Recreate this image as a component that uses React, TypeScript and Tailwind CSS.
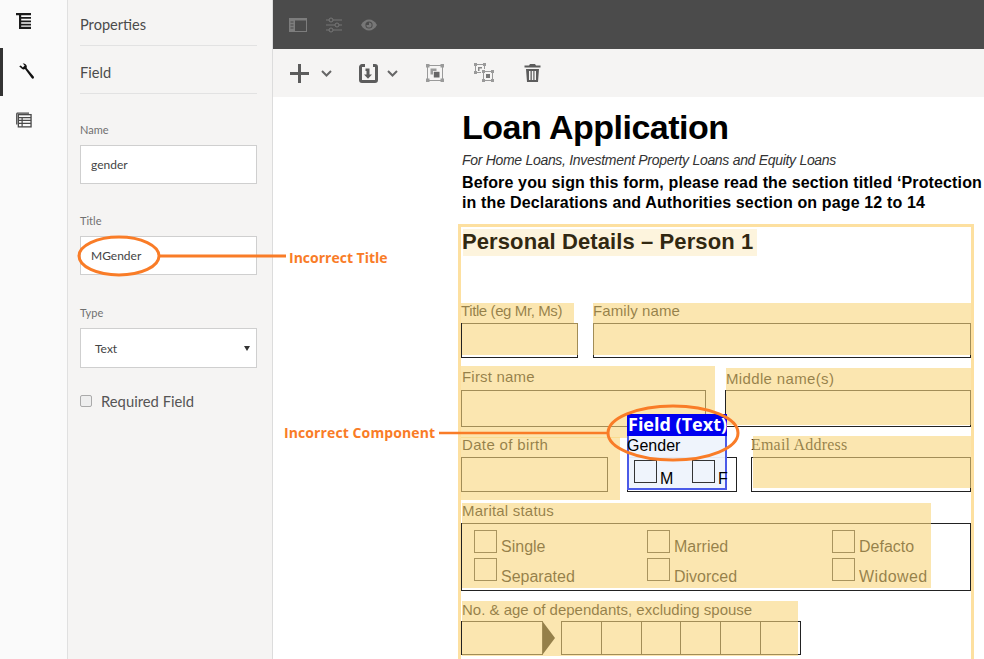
// Form editor screenshot: tool rail, properties panel, PDF form with highlighted fields
import type { ReactNode } from 'react';

function TreeIcon() {
  return (
    <svg width="16" height="16" viewBox="0 0 16 16" className="text-[#1c1c1c]">
      <path d="M0 0h15v2.200H0zM3 4h12v1.800H3zM3 7.400h12v1.800H3zM3 10.800h12v1.800H3zM3 13.800h12V16H3zM3 0h2.200v16H3z" fill="currentColor" />
    </svg>
  );
}

function WrenchIcon() {
  return (
    <svg width="16" height="16" viewBox="0 0 16 16">
      <path d="M.2 3.200 2.600 5.600c1.100 1 2.400 1.100 3.400.5l6.600 9c.5.6 1.200.7 1.800.3.700-.5.800-1.200.3-1.800L7.600 5c.5-1.300.2-2.600-.8-3.600C5.900.5 4.700.2 3.700.6l2 2-1.900 2-2-2.100z" fill="#111" />
    </svg>
  );
}

function TableIcon() {
  return (
    <svg width="16" height="16" viewBox="0 0 17 17" fill="none" stroke="#4a4a4a">
      <path d="M.8 1.200h13M.8 1.200v12" strokeWidth="1.400" />
      <rect x="2.500" y="2.800" width="13.500" height="13" strokeWidth="1.400" />
      <path d="M2.500 6h13.500M2.500 9h13.500M2.500 12.200h13.500M6.500 6v9.800" strokeWidth="1.300" />
    </svg>
  );
}

function PanelIcon() {
  return (
    <svg width="18" height="14" viewBox="0 0 18 14">
      <path d="M0 0h18v14H0z" fill="#7d7d7d" />
      <path d="M6 2.500h11v10.500H6z" fill="#4b4b4b" />
      <path d="M1.500 3.500h3v1h-3zM1.500 6.500h3v1h-3zM1.500 9.500h3v1h-3z" fill="#4b4b4b" />
    </svg>
  );
}

function SlidersIcon() {
  return (
    <svg width="18" height="16" viewBox="0 0 18 16" fill="none" stroke="#777" strokeWidth="1">
      <path d="M1 3h3.500M8 3h9M1 8h9M14 8h3M1 13h3.500M8 13h9" />
      <circle cx="6" cy="3" r="2" />
      <circle cx="12" cy="8" r="2" />
      <circle cx="6" cy="13" r="2" />
    </svg>
  );
}

function EyeIcon() {
  return (
    <svg width="16" height="12" viewBox="0 0 16 12">
      <path d="M0 6c2-3.600 4.800-5.500 8-5.500S14 2.400 16 6c-2 3.600-4.800 5.500-8 5.500S2 9.600 0 6z" fill="#777" />
      <circle cx="8" cy="6" r="3.600" fill="#4b4b4b" />
      <path d="M8 3.400A2.600 2.600 0 1 1 5.400 6H8z" fill="#777" />
    </svg>
  );
}

function Chevron({ className }: { className: string }) {
  return (
    <svg width="11" height="7" viewBox="0 0 11 7" fill="none" className={className}>
      <path d="M1 1l4.500 4.500L10 1" stroke="#666" strokeWidth="2" />
    </svg>
  );
}

function GroupIcon() {
  return (
    <svg width="18" height="18" viewBox="0 0 18 18">
      <g fill="#9a9a9a">
        <rect x="0" y="0" width="3.500" height="3.500" />
        <rect x="14.500" y="0" width="3.500" height="3.500" />
        <rect x="0" y="14.500" width="3.500" height="3.500" />
        <rect x="14.500" y="14.500" width="3.500" height="3.500" />
        <path d="M1 3h1v12H1zM16 3h1v12h-1zM3 1h12v1H3zM3 16h12v1H3z" />
        <path d="M4.500 4.500h6v2.500h-3.500v3.500H4.500z" />
      </g>
      <rect x="7.800" y="7.800" width="5.700" height="5.700" fill="#666" />
    </svg>
  );
}

function UngroupIcon() {
  return (
    <svg width="20" height="20" viewBox="0 0 20 20" fill="#9a9a9a">
      <path d="M0 0h3v3H0zM9 0h3v3H9zM0 8h3v3H0zM8 7h3v3H8zM17 7h3v3h-3zM8 16h3v3H8zM17 16h3v3h-3z" />
      <path d="M3 1h6v1H3zM1 3h1v5H1zM3 9h4v1H3zM10 1h1v5h-1zM11 8h6v1h-6zM11 17h6v1h-6zM9 10h1v6H9zM18 10h1v6h-1z" />
      <path d="M4 4h4v1.500H5.500V8H4z" fill="#888" />
      <rect x="12" y="11" width="4" height="4" fill="#777" />
    </svg>
  );
}

function TrashIcon() {
  return (
    <svg width="17" height="18" viewBox="0 0 17 18" fill="#5c5c5c">
      <path d="M6 0h5l1 1.500h4.500v2H.5v-2H5z" />
      <path d="M2 5h13l-1 13H3zM5 7v9h1.500V7zM7.800 7v9h1.500V7zM10.500 7v9H12V7z" fillRule="evenodd" />
    </svg>
  );
}

function SaveIcon() {
  return (
    <svg width="19" height="19" viewBox="0 0 19 19" fill="none">
      <path d="M6 1.500H3a1.500 1.500 0 0 0-1.500 1.500v13A1.500 1.500 0 0 0 3 17.500h13a1.500 1.500 0 0 0 1.500-1.500V3A1.500 1.500 0 0 0 16 1.500h-2" stroke="#5c5c5c" strokeWidth="3" />
      <path d="M6.500 4.500h4v6H13l-4 4.200-4-4.200h2.500V7H6.500z" fill="#5c5c5c" />
    </svg>
  );
}

function PanelField({ label, value, className }: { label: string; value: string; className: string }) {
  return (
    <div className={className}>
      <div className="text-[11px] leading-[14px] text-[#707070]">{label}</div>
      <div className="mt-[8px] h-[39px] w-[177px] border border-[#cfcfcf] bg-white pl-[10px] text-[12px] leading-[37px] text-[#444]">
        {value}
      </div>
    </div>
  );
}

function PropertiesPanel() {
  return (
    <aside className="w-[205px] shrink-0 border-r border-[#dcdcdc] bg-[#f5f4f3] pl-[12px] pr-[15px] font-['Lato',sans-serif]">
      <div className="h-[46px] border-b border-[#e2e2e2] pt-[14px] text-[14.6px] leading-[22px] text-[#4b4b4b]">Properties</div>
      <div className="h-[48px] border-b border-[#e2e2e2] pt-[16px] text-[14.6px] leading-[22px] text-[#4b4b4b]">Field</div>
      <PanelField label="Name" value="gender" className="mt-[29px]" />
      <PanelField label="Title" value="MGender" className="mt-[30px]" />
      <div className="mt-[31px]">
        <div className="text-[11px] leading-[14px] text-[#707070]">Type</div>
        <div className="mt-[8px] flex h-[40px] w-[177px] items-center justify-between border border-[#cfcfcf] bg-white pl-[14px] pr-[6px] text-[12px] text-[#444]">
          <span className="pt-[2px]">Text</span>
          <span className="h-0 w-0 border-x-[3px] border-t-[5px] border-x-transparent border-t-[#333]" />
        </div>
      </div>
      <div className="mt-[23px] flex items-center gap-[9px] text-[14.8px] leading-[20px] text-[#555]">
        <span className="h-[12px] w-[12px] rounded-[2px] border border-[#aaa] bg-[#eee]" />
        Required Field
      </div>
    </aside>
  );
}

// one printed field of the form: label over box, with the editor's tint lying over it
function Field({ label, labelClass, boxClass, className, children }: { label: string; labelClass: string; boxClass: string; className: string; children?: ReactNode }) {
  return (
    <div className={`relative shrink-0 ${className}`}>
      <div className={`h-[20px] whitespace-nowrap text-black ${labelClass}`}>{label}</div>
      <div className={`border border-[#222] ${boxClass}`} />
      {children}
    </div>
  );
}

function Tint({ className }: { className: string }) {
  return <div className={`absolute bg-[#f8d57b]/60 ${className}`} />;
}

function Option({ label, labelClass }: { label: string; labelClass: string }) {
  return (
    <div className="flex items-start gap-[4px] text-[16px] leading-[18px] text-black">
      <span className="h-[23px] w-[23px] shrink-0 border border-[#333]" />
      <span className={`whitespace-nowrap ${labelClass}`}>{label}</span>
    </div>
  );
}

function SelectedField() {
  return (
    <div className="absolute left-[166px] top-[-23px] flex h-[76px] w-[100px] flex-col border-2 border-t-0 border-[#4a5ae8] bg-[#eef3fc]/95">
      <div className="-mx-[2px] h-[22px] shrink-0 whitespace-nowrap bg-[#0000f0] pl-[1px] font-['Open_Sans',sans-serif] text-[18px] font-bold leading-[21px] text-white">
        Field (Text)
      </div>
      <div className="-ml-[2px] text-[16px] leading-[20px] text-black">Gender</div>
      <div className="mt-[4px] flex pl-[5px] text-[16px] leading-[18px] text-black">
        <span className="h-[23px] w-[23px] shrink-0 border border-[#333]" />
        <span className="ml-[3px] mt-[10px] w-[32px] shrink-0">M</span>
        <span className="h-[23px] w-[23px] shrink-0 border border-[#333]" />
        <span className="ml-[3px] mt-[10px] shrink-0">F</span>
      </div>
    </div>
  );
}

function FormBody() {
  return (
    <div className="font-['Liberation_Sans',sans-serif]">
      <div className="ml-[2px] mt-[2px] h-[27px] w-[294px] whitespace-nowrap bg-[#f5c855]/20 -indent-[1px] text-[22px] font-bold leading-[26px] tracking-[0.1px] text-[#312811]">
        Personal Details – Person 1
      </div>

      <div className="mt-[47px] flex gap-[15px]">
        <Field label="Title (eg Mr, Ms)" labelClass="text-[15px] leading-[16px] tracking-[-0.4px]" boxClass="h-[35px]" className="w-[117px]">
          <Tint className="left-0 top-0 h-[20px] w-[113px]" />
          <Tint className="left-[1px] top-[20px] h-[32px] w-[116px]" />
        </Field>
        <Field label="Family name" labelClass="text-[15px] leading-[16px] tracking-[0.1px]" boxClass="h-[35px]" className="w-[378px]">
          <Tint className="left-0 top-0 h-[52px] w-[378px]" />
        </Field>
      </div>

      <div className="mt-[12px] flex gap-[19px]">
        <Field label="First name" labelClass="pl-[1px] text-[15px] leading-[14px] tracking-[0.2px]" boxClass="h-[37px]" className="w-[245px]">
          <Tint className="left-0 top-[-4px] h-[72px] w-[254px]" />
        </Field>
        <Field label="Middle name(s)" labelClass="pl-[1px] text-[15px] leading-[18px] tracking-[0.35px]" boxClass="h-[37px]" className="w-[246px]">
          <Tint className="left-[1px] top-[-2px] h-[57px] w-[245px]" />
        </Field>
      </div>

      <div className="relative mt-[10px] flex">
        <Field label="Date of birth" labelClass="pl-[1px] text-[15px] leading-[16px] tracking-[0.35px]" boxClass="h-[35px]" className="w-[147px]">
          <Tint className="left-0 top-0 h-[63px] w-[159px]" />
        </Field>
        <div className="ml-[19px] mt-[20px] h-[35px] w-[110px] shrink-0 border border-[#222]" />
        <Field label="Email Address" labelClass="font-['Liberation_Serif',serif] text-[16px] leading-[16px] tracking-[0.2px]" boxClass="h-[35px]" className="ml-[14px] w-[220px]">
          <Tint className="left-[2px] top-[-1px] h-[52px] w-[218px]" />
        </Field>
        <SelectedField />
      </div>

      <div className="relative mt-[11px]">
        <div className="h-[20px] pl-[1px] text-[15px] leading-[16px] tracking-[0.2px] text-black">Marital status</div>
        <div className="grid h-[68px] w-[510px] grid-cols-[173px_185px_1fr] grid-rows-[28px_28px] border border-[#222] pl-[12px] pt-[6px]">
          <Option label="Single" labelClass="mt-[8px]" />
          <Option label="Married" labelClass="mt-[8px]" />
          <Option label="Defacto" labelClass="mt-[8px]" />
          <Option label="Separated" labelClass="mt-[10px]" />
          <Option label="Divorced" labelClass="mt-[10px]" />
          <Option label="Widowed" labelClass="mt-[10px] tracking-[0.4px]" />
        </div>
        <Tint className="left-[1px] top-0 h-[85px] w-[469px]" />
      </div>

      <div className="relative mt-[10px]">
        <div className="h-[20px] pl-[1px] text-[15px] leading-[18px] text-black">No. &amp; age of dependants, excluding spouse</div>
        <div className="flex h-[34px] items-center">
          <div className="h-full w-[82px] border border-[#222]" />
          <div className="h-0 w-0 border-y-[16px] border-l-[12px] border-y-transparent border-l-black" />
          <div className="ml-[6px] flex h-full w-[240px] divide-x divide-[#222] border border-[#222]">
            <span className="flex-1" />
            <span className="flex-1" />
            <span className="flex-1" />
            <span className="flex-1" />
            <span className="flex-1" />
            <span className="flex-1" />
          </div>
        </div>
        <Tint className="left-[1px] top-0 h-[55px] w-[336px]" />
      </div>
    </div>
  );
}

export default function App() {
  return (
    <div className="relative flex h-[659px] w-[984px] overflow-hidden bg-white">
      {/* Rail */}
      <nav className="flex w-[68px] shrink-0 flex-col border-r border-[#e0e0e0] bg-[#fafafa]">
        <div className="flex h-[48px] items-center pb-[7px] pl-[16px]"><TreeIcon /></div>
        <div className="flex h-[48px] items-center border-l-[3px] border-[#333] pb-[3px] pl-[16px]"><WrenchIcon /></div>
        <div className="flex h-[48px] items-center pl-[16px]"><TableIcon /></div>
      </nav>

      <PropertiesPanel />

      <main className="flex min-w-0 flex-1 flex-col">
        <div className="flex h-[49px] shrink-0 items-center gap-[18px] bg-[#4b4b4b] pl-[16px]">
          <PanelIcon />
          <SlidersIcon />
          <EyeIcon />
        </div>
        <div className="flex h-[48px] shrink-0 items-center bg-[#f5f4f3] pl-[17px]">
          <svg width="19" height="19" viewBox="0 0 19 19" fill="#5c5c5c"><path d="M8 0h3v8h8v3h-8v8H8v-8H0V8h8z" /></svg>
          <Chevron className="ml-[12px]" />
          <div className="ml-[27px]"><SaveIcon /></div>
          <Chevron className="ml-[9px]" />
          <div className="ml-[28px]"><GroupIcon /></div>
          <div className="ml-[30px]"><UngroupIcon /></div>
          <div className="ml-[30px]"><TrashIcon /></div>
        </div>

        {/* Document */}
        <div className="min-h-0 flex-1 overflow-hidden pl-[185px] font-['Liberation_Sans',sans-serif]">
          <h1 className="ml-[4px] mt-[10px] whitespace-nowrap text-[34px] font-bold leading-[40px] tracking-[-0.5px] text-black">Loan Application</h1>
          <p className="ml-[4px] mt-[4px] whitespace-nowrap text-[14px] font-normal italic leading-[18px] tracking-[-0.3px] text-[#333]">For Home Loans, Investment Property Loans and Equity Loans</p>
          <p className="ml-[4px] mt-[4px] whitespace-nowrap text-[16px] font-bold leading-[20px] tracking-[0.14px] text-black">
            Before you sign this form, please read the section titled ‘Protection
            <br />
            in the Declarations and Authorities section on page 12 to 14
          </p>
          <div className="mt-[11px] h-[440px] w-[516px] border-[3px] border-b-0 border-[#fde0a0]">
            <FormBody />
          </div>
        </div>
      </main>

      {/* Review annotations */}
      <svg width="984" height="659" viewBox="0 0 984 659" fill="none" stroke="#f97c27" className="pointer-events-none absolute left-0 top-0">
        <ellipse cx="119" cy="256" rx="40" ry="19" strokeWidth="3" />
        <path d="M160 256h126" strokeWidth="3" />
        <ellipse cx="673" cy="433" rx="65" ry="27" strokeWidth="3" />
        <path d="M439 433h169" strokeWidth="2.500" />
      </svg>
      <div className="absolute left-[289px] top-[248px] font-['Open_Sans',sans-serif] text-[14px] font-bold leading-[20px] text-[#f97c27]">Incorrect Title</div>
      <div className="absolute left-[284px] top-[423px] font-['Open_Sans',sans-serif] text-[14px] font-bold leading-[20px] tracking-[0.1px] text-[#f97c27]">Incorrect Component</div>
    </div>
  );
}
